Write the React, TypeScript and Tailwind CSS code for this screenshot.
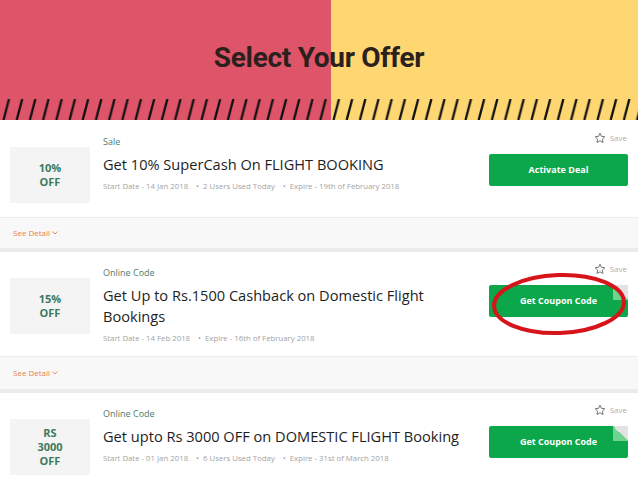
import React from "react";

type Offer = {
  amount: string[];
  label: string;
  title: string;
  meta: string[];
  cta: string;
  fold?: boolean;
  circled?: boolean;
  h: string;
};

const offers: Offer[] = [
  {
    amount: ["10%", "OFF"],
    label: "Sale",
    title: "Get 10% SuperCash On FLIGHT BOOKING",
    meta: ["Start Date - 14 Jan 2018", "2 Users Used Today", "Expire - 19th of February 2018"],
    cta: "Activate Deal",
    h: "h-[96px]",
  },
  {
    amount: ["15%", "OFF"],
    label: "Online Code",
    title: "Get Up to Rs.1500 Cashback on Domestic Flight Bookings",
    meta: ["Start Date - 14 Feb 2018", "Expire - 16th of February 2018"],
    cta: "Get Coupon Code",
    fold: true,
    circled: true,
    h: "h-[104px]",
  },
  {
    amount: ["RS", "3000", "OFF"],
    label: "Online Code",
    title: "Get upto Rs 3000 OFF on DOMESTIC FLIGHT Booking",
    meta: ["Start Date - 01 Jan 2018", "6 Users Used Today", "Expire - 31st of March 2018"],
    cta: "Get Coupon Code",
    fold: true,
    h: "h-[96px]",
  },
];

const Star = () => (
  <svg width="12" height="12" viewBox="0 0 24 24" fill="none" stroke="#666" strokeWidth="1.8" strokeLinejoin="round">
    <path d="M12 2.5l2.9 6.2 6.8.8-5 4.7 1.3 6.7L12 17.6l-6 3.3 1.3-6.7-5-4.7 6.8-.8z" />
  </svg>
);

const Stripes = () => (
  <svg width="638" height="21" className="block">
    <defs>
      <pattern id="sl" width="13.2" height="21" patternUnits="userSpaceOnUse" x="2">
        <line x1="1.5" y1="21" x2="7" y2="0" stroke="#111" strokeWidth="2.3" />
      </pattern>
    </defs>
    <rect width="638" height="21" fill="url(#sl)" />
  </svg>
);

const Card = ({ o }: { o: Offer }) => (
  <div className={`bg-white flex ${o.h}`}>
    <div className="ml-[10px] mt-[26px] w-[80px] h-[56px] bg-[#f4f4f4] flex flex-col items-center justify-center text-[11px] leading-[14px] font-bold text-[#3c7a5c]">
      {o.amount.map((a) => (
        <span key={a}>{a}</span>
      ))}
    </div>
    <div className="ml-[13px] w-[372px] pt-[15px]">
      <div className="text-[9px] leading-[12px] text-[#4d7c6c]">{o.label}</div>
      <div className="mt-[6px] text-[14.6px] leading-[21px] text-[#1e1e1e]">{o.title}</div>
      <div className="mt-[5px] text-[7.8px] leading-[12px] text-[#a3a3a3] flex gap-[8px]">
        {o.meta.map((m, i) => (
          <span key={m}>
            {i > 0 && <span className="mr-[4px]">•</span>}
            {m}
          </span>
        ))}
      </div>
    </div>
    <div className="ml-[14px] w-[139px] pt-[10px] flex flex-col">
      <div className="flex items-center justify-end gap-[4px] h-[14px] pr-[1px]">
        <Star />
        <span className="text-[8px] text-[#b0b0b0]">Save</span>
      </div>
      <div className="relative mt-[9px] h-[32px] bg-[#0ca74a] rounded-[2px] flex items-center justify-center text-white text-[9px] font-bold">
        {o.cta}
        {o.fold && (
          <span className="absolute top-0 right-0 w-[15px] h-[15px] bg-[linear-gradient(to_bottom_left,#e3e3e3_50%,#6fd392_50%)]" />
        )}
        {o.circled && (
          <svg className="absolute left-[3px] top-[-12px] overflow-visible" width="134" height="62">
            <ellipse cx="67" cy="31" rx="65" ry="29" fill="none" stroke="#d7141a" strokeWidth="4" transform="rotate(-2 67 31)" />
          </svg>
        )}
      </div>
    </div>
  </div>
);

const Footer = ({ h }: { h: string }) => (
  <div className={`${h} bg-[#f8f8f8] border-t border-[#ececec] flex items-center pl-[13px] text-[8px] text-[#e8804a]`}>
    See Detail
    <svg className="ml-[2px]" width="6" height="4" viewBox="0 0 6 4" fill="none" stroke="#e8804a" strokeWidth="0.9">
      <path d="M0.5 0.5l2.5 2.5 2.5-2.5" />
    </svg>
  </div>
);

export default function App() {
  return (
    <div className="w-[638px] h-[479px] overflow-hidden bg-[#ebebeb]" style={{ fontFamily: '"Open Sans", "Noto Sans", sans-serif' }}>
      <div className="h-[120px] flex flex-col bg-[linear-gradient(to_right,#de5468_331px,#fed772_331px)]">
        <div className="flex-1 flex items-center justify-center pt-[16px]">
          <h1 className="text-[28px] font-bold tracking-[-0.3px] text-[#2a211d]" style={{ fontFamily: "Roboto, sans-serif" }}>
            Select Your Offer
          </h1>
        </div>
        <Stripes />
      </div>
      <div className="h-[1px] bg-white" />
      <Card o={offers[0]} />
      <Footer h="h-[31px]" />
      <div className="h-[4px]" />
      <Card o={offers[1]} />
      <Footer h="h-[33px]" />
      <div className="h-[4px]" />
      <Card o={offers[2]} />
    </div>
  );
}
